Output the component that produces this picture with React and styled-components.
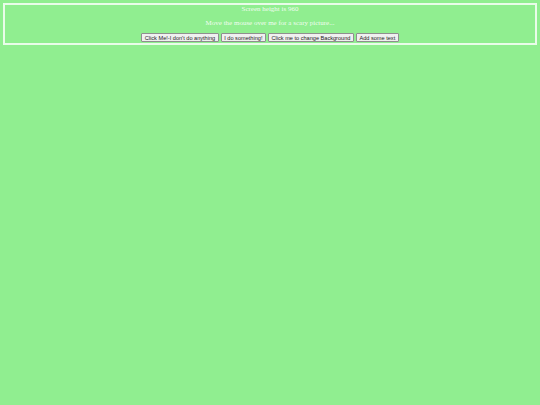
import React from "react";
import styled, { createGlobalStyle } from "styled-components";

const GlobalStyle = createGlobalStyle`
  html, body {
    margin: 0;
    background-color: #90ee90;
  }
  body {
    padding: 3px;
    font-family: "Liberation Serif", "Times New Roman", serif;
  }
`;

const Frame = styled.div`
  border: 2px solid rgba(255, 255, 255, 0.8);
  text-align: center;
  color: rgba(255, 255, 255, 0.9);
  font-size: 7px;
  padding-top: 1px;
`;

const Title = styled.div`
  line-height: 7px;
  margin-bottom: 7px;
`;

const Hint = styled.p`
  margin: 0 0 6px;
  line-height: 7px;
`;

const Buttons = styled.div`
  display: flex;
  justify-content: center;
  gap: 2px;
  margin-bottom: 1px;
`;

const Button = styled.button`
  font-family: "Liberation Sans", Arial, sans-serif;
  font-size: 5.6px;
  line-height: 6px;
  height: 9px;
  padding: 0 2.5px;
  background: #f0f0f0;
  color: #222;
  border: 1px solid #8f8f8f;
  border-radius: 1px;
`;

export default function App() {
  return (
    <>
      <GlobalStyle />
      <Frame>
        <Title>Screen height is 960</Title>
        <Hint>Move the mouse over me for a scary picture...</Hint>
        <Buttons>
          <Button>Click Me!-I don't do anything</Button>
          <Button>I do something!</Button>
          <Button>Click me to change Background</Button>
          <Button>Add some text</Button>
        </Buttons>
      </Frame>
    </>
  );
}
